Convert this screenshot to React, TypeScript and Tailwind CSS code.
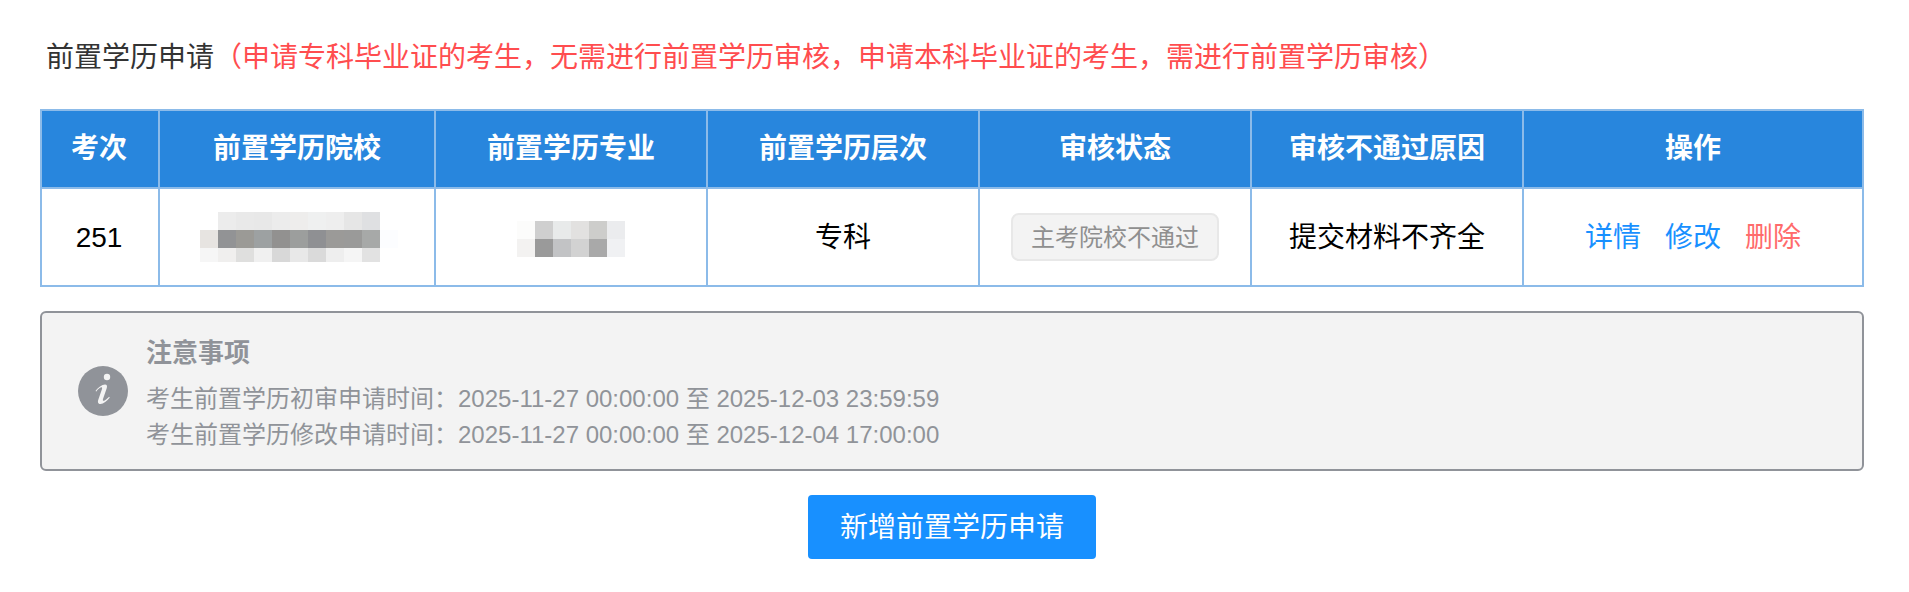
import React from "react";

const font = "font-['Liberation_Sans','Noto_Sans_CJK_SC',sans-serif]";

const headers = [
  { label: "考次", w: "w-[118px] pr-[2px]" },
  { label: "前置学历院校", w: "w-[276px]" },
  { label: "前置学历专业", w: "w-[272px]" },
  { label: "前置学历层次", w: "w-[272px]" },
  { label: "审核状态", w: "w-[272px]" },
  { label: "审核不通过原因", w: "w-[272px]" },
  { label: "操作", w: "" },
];

// blocs de pixels floutés
const schoolBlur = [
  ["bg-white", "bg-[#ececec]", "bg-[#e9e9e9]", "bg-[#e8e8e8]", "bg-[#ececec]", "bg-[#eeedec]", "bg-[#eff0f0]", "bg-[#eeeeee]", "bg-[#e6e6e6]", "bg-[#dfe0e2]", "bg-white"],
  ["bg-[#e7e4e1]", "bg-[#929395]", "bg-[#9b9a96]", "bg-[#9da1a2]", "bg-[#929190]", "bg-[#9c9e9d]", "bg-[#8f9093]", "bg-[#9b9a98]", "bg-[#9a9a99]", "bg-[#a7a9a8]", "bg-[#fcfdff]"],
  ["bg-[#f6f6f6]", "bg-[#f0efee]", "bg-[#dfdfde]", "bg-[#f0f0f0]", "bg-[#d8d8d8]", "bg-[#e8e8e8]", "bg-[#dadada]", "bg-[#eeeeee]", "bg-[#f5f5f5]", "bg-[#e2e2e2]", "bg-white"],
];
const majorBlur = [
  ["bg-[#fcfcfb]", "bg-[#cfcfcf]", "bg-[#e8eaea]", "bg-[#e2e1e0]", "bg-[#cdcdcb]", "bg-[#ebecee]"],
  ["bg-[#f3f2f1]", "bg-[#9a9a9a]", "bg-[#c2c3c5]", "bg-[#d2d2d2]", "bg-[#a9a9a9]", "bg-[#f0f1f3]"],
];

function Blur({ rows, last }: { rows: string[][]; last: string }) {
  return (
    <div className="inline-flex flex-col align-middle">
      {rows.map((row, i) => (
        <div key={i} className={`flex ${i === rows.length - 1 ? last : "h-[18px]"}`}>
          {row.map((c, j) => (
            <div key={j} className={`w-[18px] ${c}`} />
          ))}
        </div>
      ))}
    </div>
  );
}

export default function App() {
  return (
    <div className={`${font} bg-white h-[592px] px-[40px] pt-[37px] text-black`}>
      <p className="text-[28px] leading-[42px] pl-[6px] h-[72px] text-[#333333]">
        前置学历申请
        <span className="text-[#ff4d4f]">（申请专科毕业证的考生，无需进行前置学历审核，申请本科毕业证的考生，需进行前置学历审核）</span>
      </p>

      <table className="w-[1824px] table-fixed border-collapse border-2 border-[#8cbbe9] text-[28px]">
        <thead>
          <tr className="h-[78px] bg-[#2886dd] text-white">
            {headers.map((h) => (
              <th key={h.label} className={`${h.w} border-2 border-[#8cbbe9] font-bold`}>
                {h.label}
              </th>
            ))}
          </tr>
        </thead>
        <tbody>
          <tr className="h-[98px] text-center">
            <td className="border-2 border-[#8cbbe9] pt-[2px] pr-[2px]">251</td>
            <td className="border-2 border-[#8cbbe9] pl-[4px]">
              <Blur rows={schoolBlur} last="h-[14px]" />
            </td>
            <td className="border-2 border-[#8cbbe9]">
              <Blur rows={majorBlur} last="h-[18px]" />
            </td>
            <td className="border-2 border-[#8cbbe9] pt-[2px]">专科</td>
            <td className="border-2 border-[#8cbbe9]">
              <span className="inline-block h-[48px] w-[208px] rounded-[8px] border-2 border-[#e8e8e8] bg-[#f3f3f3] text-[24px] leading-[45px] text-[#8f8f8f]">
                主考院校不通过
              </span>
            </td>
            <td className="border-2 border-[#8cbbe9] pt-[2px]">提交材料不齐全</td>
            <td className="border-2 border-[#8cbbe9] pt-[2px]">
              <div className="flex justify-center gap-[24px]">
                <a className="text-[#1890ff]">详情</a>
                <a className="text-[#1890ff]">修改</a>
                <a className="text-[#ff6b6b]">删除</a>
              </div>
            </td>
          </tr>
        </tbody>
      </table>

      <div className="mt-[24px] h-[160px] w-[1824px] rounded-[6px] border-2 border-[#909399] bg-[#f3f3f3] flex items-center pl-[36px] text-[#909399]">
        <svg width="50" height="50" viewBox="0 0 50 50" className="shrink-0">
          <circle cx="25" cy="25" r="25" fill="#909399" />
          <circle cx="29" cy="11" r="3.2" fill="#f3f3f3" />
          <path
            d="M17.5 25C20 21.5 24 18.5 27 18.5C29 18.5 29.3 20 28.8 22L25 33C24.5 35 25.5 35.3 27 34.3C28.5 33.3 30 32 31 30.8L31.8 31.6C29 35 25.5 38 22.5 38C20 38 19.6 36 20.2 34L24 23C24.5 21 23.5 20.8 22 21.8C20.8 22.6 19.4 24 18.4 25.5Z"
            fill="#f3f3f3"
          />
        </svg>
        <div className="ml-[18px] mt-[6px]">
          <div className="text-[26px] font-bold leading-[36px] mb-[10px]">注意事项</div>
          <div className="text-[24px] leading-[36px]">考生前置学历初审申请时间：2025-11-27 00:00:00 至 2025-12-03 23:59:59</div>
          <div className="text-[24px] leading-[36px]">考生前置学历修改申请时间：2025-11-27 00:00:00 至 2025-12-04 17:00:00</div>
        </div>
      </div>

      <div className="mt-[24px] flex w-[1824px] justify-center">
        <button className="h-[64px] w-[288px] rounded-[4px] bg-[#1890ff] pt-[2px] text-[28px] text-white">新增前置学历申请</button>
      </div>
    </div>
  );
}
